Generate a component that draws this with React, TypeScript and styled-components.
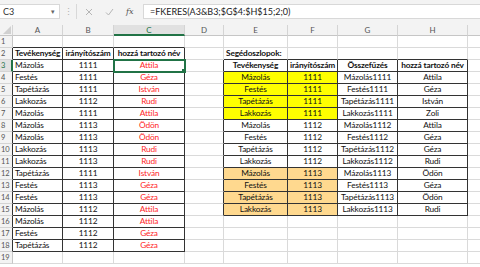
import React from 'react'
import styled, { createGlobalStyle } from 'styled-components'

const GlobalStyle = createGlobalStyle`
  html, body { margin: 0; padding: 0; background: #ffffff; overflow: hidden; }
  body { font-family: Lato, "Open Sans", sans-serif; }
`

const COLS = [50, 51, 71, 39, 64, 50, 60, 70, 40]
const LETTERS = ['A', 'B', 'C', 'D', 'E', 'F', 'G', 'H', '']
const ROWS = 19

type CellData = { text: string; bold?: boolean; align?: 'left' | 'center'; color?: string; bg?: string; spill?: boolean }

const YELLOW = '#ffff00'
const GOLD = '#ffd98f'
const RED = '#ff1f1f'

const leftRows = [
  ['Mázolás', '1111', 'Attila'],
  ['Festés', '1111', 'Géza'],
  ['Tapétázás', '1111', 'István'],
  ['Lakkozás', '1112', 'Rudi'],
  ['Mázolás', '1111', 'Attila'],
  ['Mázolás', '1113', 'Ödön'],
  ['Mázolás', '1113', 'Ödön'],
  ['Lakkozás', '1113', 'Rudi'],
  ['Lakkozás', '1113', 'Rudi'],
  ['Tapétázás', '1111', 'István'],
  ['Festés', '1113', 'Géza'],
  ['Festés', '1113', 'Géza'],
  ['Mázolás', '1112', 'Attila'],
  ['Mázolás', '1112', 'Attila'],
  ['Festés', '1112', 'Géza'],
  ['Tapétázás', '1112', 'Géza'],
]

const names: Record<string, string> = {
  'Mázolás1111': 'Attila', 'Festés1111': 'Géza', 'Tapétázás1111': 'István', 'Lakkozás1111': 'Zoli',
  'Mázolás1112': 'Attila', 'Festés1112': 'Géza', 'Tapétázás1112': 'Géza', 'Lakkozás1112': 'Rudi',
  'Mázolás1113': 'Ödön', 'Festés1113': 'Géza', 'Tapétázás1113': 'Ödön', 'Lakkozás1113': 'Rudi',
}

// cell map, key "row,col" (row 1-based, col 0 = A)
const cells: Record<string, CellData> = {}
const put = (r: number, c: number, d: CellData) => { cells[r + ',' + c] = d }

;['Tevékenység', 'irányítószám', 'hozzá tartozó név'].forEach((t, i) =>
  put(2, i, { text: t, bold: true, align: i === 0 ? 'left' : 'center' }))
leftRows.forEach((row, i) => {
  put(i + 3, 0, { text: row[0] })
  put(i + 3, 1, { text: row[1], align: 'center' })
  put(i + 3, 2, { text: row[2], align: 'center', color: RED })
})

put(2, 4, { text: 'Segédoszlopok:', bold: true, spill: true })
;['Tevékenység', 'irányítószám', 'Összefűzés', 'hozzá tartozó név'].forEach((t, i) =>
  put(3, i + 4, { text: t, bold: true, align: 'center' }))
const jobs = ['Mázolás', 'Festés', 'Tapétázás', 'Lakkozás']
const codes = ['1111', '1112', '1113']
codes.forEach((code, ci) => jobs.forEach((job, ji) => {
  const r = 4 + ci * 4 + ji
  const bg = ci === 0 ? YELLOW : ci === 2 ? GOLD : undefined
  put(r, 4, { text: job, align: 'center', bg })
  put(r, 5, { text: code, align: 'center', bg })
  put(r, 6, { text: job + code, align: 'center' })
  put(r, 7, { text: names[job + code], align: 'center' })
}))

const inTable = (r: number, c: number) =>
  (r >= 2 && r <= 18 && c >= 0 && c <= 2) || (r >= 3 && r <= 15 && c >= 4 && c <= 7)

const App = () => (
  <Page>
    <GlobalStyle />
    <TopBar>
      <NameBox>
        <span>C3</span>
        <Caret>▾</Caret>
      </NameBox>
      <Splitter>⋮</Splitter>
      <FxButtons>
        <svg width="8" height="8" viewBox="0 0 8 8">
          <path d="M1 1 L7 7 M7 1 L1 7" stroke="#b5b5b5" strokeWidth="1" fill="none" />
        </svg>
        <svg width="9" height="8" viewBox="0 0 9 8">
          <path d="M1 4.5 L3.5 7 L8 1" stroke="#b5b5b5" strokeWidth="1" fill="none" />
        </svg>
        <Fx>fx</Fx>
      </FxButtons>
      <FormulaBox>=FKERES(A3&amp;B3;$G$4:$H$15;2;0)</FormulaBox>
    </TopBar>
    <Sheet>
      <Corner>
        <svg width="8" height="8" viewBox="0 0 8 8">
          <path d="M8 0 L8 8 L0 8 Z" fill="#d0d0d0" />
        </svg>
      </Corner>
      {LETTERS.map((l, i) => (
        <ColHead key={i} $active={i === 2}>{l}</ColHead>
      ))}
      {Array.from({ length: ROWS }, (_, ri) => {
        const r = ri + 1
        return (
          <React.Fragment key={r}>
            <RowHead $active={r === 3} $dark={inTable(r, 0)}>{r}</RowHead>
            {COLS.map((_, c) => {
              const d = cells[r + ',' + c]
              const sel = r === 3 && c === 2
              return (
                <Cell
                  key={c}
                  $bold={d?.bold}
                  $align={d?.align || 'left'}
                  $color={d?.color}
                  $bg={d?.bg}
                  $spill={d?.spill}
                  $rd={inTable(r, c) || inTable(r, c + 1)}
                  $bd={inTable(r, c) || inTable(r + 1, c)}
                  $sel={sel}
                >
                  {d?.text}
                  {sel && <Handle />}
                </Cell>
              )
            })}
          </React.Fragment>
        )
      })}
    </Sheet>
  </Page>
)

export default App

const Page = styled.div`
  width: 480px;
  height: 267px;
  overflow: hidden;
  background: #ffffff;
`

const TopBar = styled.div`
  height: 25px;
  box-sizing: border-box;
  padding-top: 4px;
  display: flex;
  align-items: flex-start;
  background: #f3f3f3;
  font-family: Lato, sans-serif;
  font-size: 9px;
  color: #333333;
`

const NameBox = styled.div`
  width: 60px;
  height: 15px;
  box-sizing: border-box;
  background: #ffffff;
  border: 1px solid #d8d8d8;
  border-left: none;
  display: flex;
  align-items: center;
  justify-content: space-between;
  padding: 0 4px 0 3px;
`

const Caret = styled.span`
  font-size: 7px;
  color: #666666;
`

const Splitter = styled.div`
  width: 16px;
  height: 15px;
  line-height: 15px;
  text-align: center;
  color: #b0b0b0;
  font-size: 9px;
`

const FxButtons = styled.div`
  width: 67px;
  height: 15px;
  box-sizing: border-box;
  border-left: 1px solid #d8d8d8;
  display: flex;
  align-items: center;
  gap: 12px;
  padding-left: 8px;
`

const Fx = styled.span`
  font-family: "DejaVu Serif", serif;
  font-style: italic;
  font-size: 8px;
  color: #555555;
`

const FormulaBox = styled.div`
  flex: 1;
  height: 15px;
  line-height: 14px;
  box-sizing: border-box;
  background: #ffffff;
  border: 1px solid #d8d8d8;
  border-right: none;
  padding-left: 6px;
  color: #222222;
  white-space: nowrap;
`

const Sheet = styled.div`
  display: grid;
  grid-template-columns: 13px ${COLS.map(w => w + 'px').join(' ')};
  grid-template-rows: 11px;
  grid-auto-rows: 12px;
  font-family: Lato, sans-serif;
  font-size: 8.3px;
  letter-spacing: -0.15px;
  color: #111111;
`

const Corner = styled.div`
  background: #f3f3f3;
  border-right: 1px solid #d4d4d4;
  border-bottom: 1px solid #c6c6c6;
  box-sizing: border-box;
  display: flex;
  align-items: flex-end;
  justify-content: flex-end;
  padding: 0 1px 1px 0;
`

const ColHead = styled.div<{ $active?: boolean }>`
  box-sizing: border-box;
  background: ${p => (p.$active ? '#e1e1e1' : '#f3f3f3')};
  border-right: 1px solid #d4d4d4;
  border-bottom: ${p => (p.$active ? '2px solid #217346' : '1px solid #c6c6c6')};
  color: ${p => (p.$active ? '#217346' : '#555555')};
  font-size: 8px;
  letter-spacing: 0;
  line-height: 10px;
  text-align: center;
`

const RowHead = styled.div<{ $active?: boolean; $dark?: boolean }>`
  box-sizing: border-box;
  background: ${p => (p.$active ? '#e1e1e1' : '#f3f3f3')};
  border-right: ${p => (p.$active ? '2px solid #217346' : p.$dark ? '1px solid #333333' : '1px solid #c6c6c6')};
  border-bottom: 1px solid #d4d4d4;
  color: ${p => (p.$active ? '#217346' : '#555555')};
  font-size: 7.5px;
  letter-spacing: 0;
  line-height: 11px;
  padding-left: 1px;
  overflow: hidden;
  white-space: nowrap;
`

const Cell = styled.div<{
  $bold?: boolean
  $align: string
  $color?: string
  $bg?: string
  $spill?: boolean
  $rd?: boolean
  $bd?: boolean
  $sel?: boolean
}>`
  position: relative;
  box-sizing: border-box;
  background: ${p => p.$bg || '#ffffff'};
  border-right: 1px solid ${p => (p.$rd ? '#333333' : '#dadada')};
  border-bottom: 1px solid ${p => (p.$bd ? '#333333' : '#dadada')};
  font-weight: ${p => (p.$bold ? 700 : 400)};
  color: ${p => p.$color || '#111111'};
  text-align: ${p => p.$align};
  line-height: 11px;
  padding: 0 2px;
  white-space: nowrap;
  overflow: ${p => (p.$spill ? 'visible' : 'hidden')};
  z-index: ${p => (p.$spill || p.$sel ? 1 : 0)};
  outline: ${p => (p.$sel ? '2px solid #217346' : 'none')};
  outline-offset: -1px;
`

const Handle = styled.span`
  position: absolute;
  right: -3px;
  bottom: -3px;
  width: 4px;
  height: 4px;
  background: #217346;
  border: 1px solid #ffffff;
`
